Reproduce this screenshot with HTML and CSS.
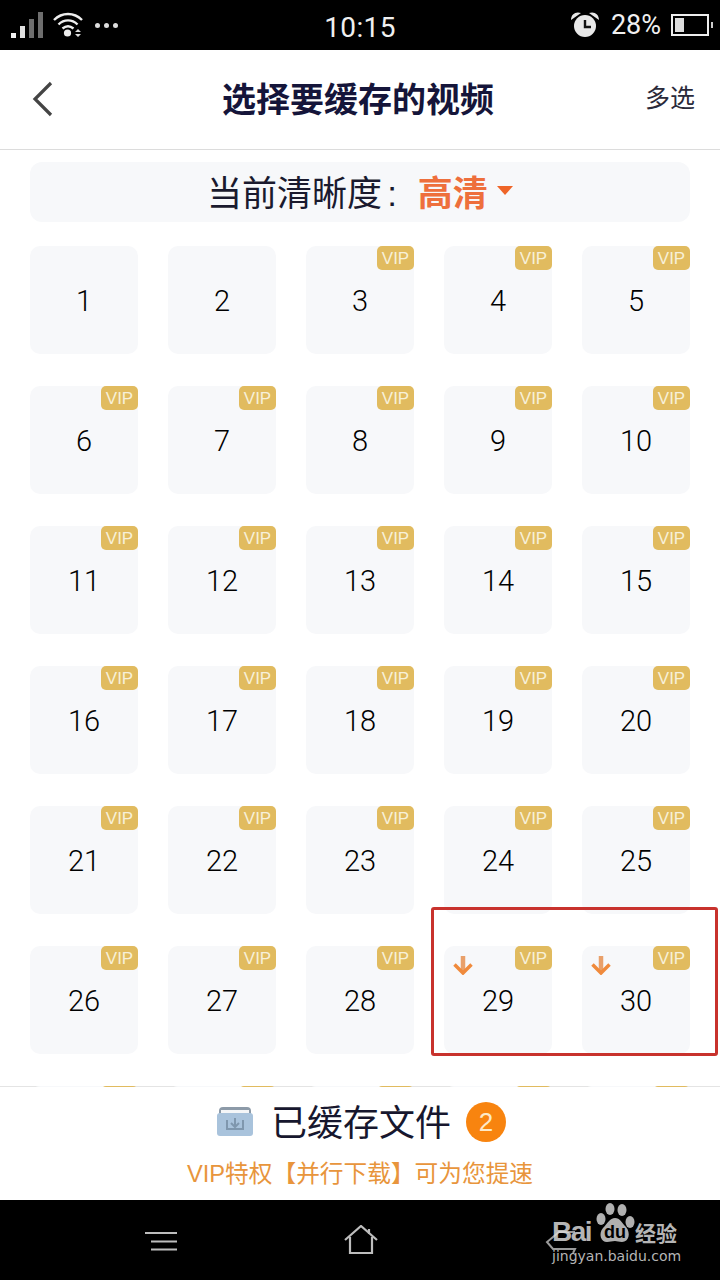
FILE: index.html
```html
<!DOCTYPE html>
<html lang="zh-CN">
<head>
<meta charset="UTF-8">
<meta name="viewport" content="width=device-width, initial-scale=1.0">
<title>选择要缓存的视频</title>
<link rel="stylesheet" href="styles.css">
</head>
<body>

<div class="screen">
    <div class="status-bar">
        <div class="status-left">
            <svg class="icon-signal" width="32" height="28" viewBox="0 0 32 28">
                <rect x="0" y="22" width="5" height="5" fill="#f2f2f2"/>
                <rect x="9" y="15" width="5" height="12" fill="#e0e0e0"/>
                <rect x="18" y="8" width="5" height="19" fill="#6e6e6e"/>
                <rect x="27" y="1" width="5" height="26" fill="#6e6e6e"/>
            </svg>
            <svg class="icon-wifi" width="32" height="26" viewBox="0 0 32 26">
                <path d="M2 8 C10 0 22 0 30 8" fill="none" stroke="#eee" stroke-width="2.4"/>
                <path d="M6.500 12.500 C12 7 20 7 25.500 12.500" fill="none" stroke="#eee" stroke-width="2.4"/>
                <path d="M10.500 16.500 C14 13.500 18 13.500 21.500 16.500" fill="none" stroke="#eee" stroke-width="2.4"/>
                <circle cx="15.500" cy="21" r="3.600" fill="#eee"/>
                <path d="M23 20 L26 17 L29 20 Z M23 22 L29 22 L26 25 Z" fill="#ddd"/>
            </svg>
            <div class="status-dots"><span></span><span></span><span></span></div>
        </div>
        <div class="status-time">10:15</div>
        <div class="status-right">
            <svg width="28" height="26" viewBox="0 0 28 26">
                <circle cx="14" cy="14" r="11" fill="#e8e8e8"/>
                <path d="M0 8 C0 2 5 -1 10 1 Z M28 8 C28 2 23 -1 18 1 Z" fill="#e8e8e8"/>
                <path d="M14 8 V15 H20" fill="none" stroke="#111" stroke-width="2.4"/>
            </svg>
            <span class="status-pct">28%</span>
            <div class="battery"><div class="battery-level"></div></div>
        </div>
    </div>

    <div class="header">
        <svg class="back" width="22" height="36" viewBox="0 0 22 36">
            <path d="M19 2 L3 18 L19 34" fill="none" stroke="#444" stroke-width="3.2"/>
        </svg>
        <h1 class="title">选择要缓存的视频</h1>
        <span class="multi">多选</span>
    </div>

    <div class="content">
        <div class="quality">
            <span class="quality-label">当前清晰度<span class="colon">:</span></span>
            <span class="quality-value">高清</span>
            <span class="caret"></span>
        </div>
        <div class="grid">
            <div class="cell">1</div>
            <div class="cell">2</div>
            <div class="cell">3<span class="vip">VIP</span></div>
            <div class="cell">4<span class="vip">VIP</span></div>
            <div class="cell">5<span class="vip">VIP</span></div>
            <div class="cell">6<span class="vip">VIP</span></div>
            <div class="cell">7<span class="vip">VIP</span></div>
            <div class="cell">8<span class="vip">VIP</span></div>
            <div class="cell">9<span class="vip">VIP</span></div>
            <div class="cell">10<span class="vip">VIP</span></div>
            <div class="cell">11<span class="vip">VIP</span></div>
            <div class="cell">12<span class="vip">VIP</span></div>
            <div class="cell">13<span class="vip">VIP</span></div>
            <div class="cell">14<span class="vip">VIP</span></div>
            <div class="cell">15<span class="vip">VIP</span></div>
            <div class="cell">16<span class="vip">VIP</span></div>
            <div class="cell">17<span class="vip">VIP</span></div>
            <div class="cell">18<span class="vip">VIP</span></div>
            <div class="cell">19<span class="vip">VIP</span></div>
            <div class="cell">20<span class="vip">VIP</span></div>
            <div class="cell">21<span class="vip">VIP</span></div>
            <div class="cell">22<span class="vip">VIP</span></div>
            <div class="cell">23<span class="vip">VIP</span></div>
            <div class="cell">24<span class="vip">VIP</span></div>
            <div class="cell">25<span class="vip">VIP</span></div>
            <div class="cell">26<span class="vip">VIP</span></div>
            <div class="cell">27<span class="vip">VIP</span></div>
            <div class="cell">28<span class="vip">VIP</span></div>
            <div class="cell">29<span class="vip">VIP</span>
                <svg class="arrow" width="20" height="20" viewBox="0 0 20 20">
                    <path d="M10 1 V17" stroke="#e9a06a" stroke-width="4.5"/>
                    <path d="M1.500 9.500 L10 18 L18.500 9.500" fill="none" stroke="#f08a3c" stroke-width="3.5"/>
                </svg>
            </div>
            <div class="cell">30<span class="vip">VIP</span>
                <svg class="arrow" width="20" height="20" viewBox="0 0 20 20">
                    <path d="M10 1 V17" stroke="#e9a06a" stroke-width="4.5"/>
                    <path d="M1.500 9.500 L10 18 L18.500 9.500" fill="none" stroke="#f08a3c" stroke-width="3.5"/>
                </svg>
            </div>
            <!-- next row, only the top edge of its badges shows -->
            <div class="cell"><span class="vip"></span></div>
            <div class="cell"><span class="vip"></span></div>
            <div class="cell"><span class="vip"></span></div>
            <div class="cell"><span class="vip"></span></div>
            <div class="cell"><span class="vip"></span></div>
        </div>
    </div>

    <div class="footer">
        <div class="cached">
            <svg class="folder" width="38" height="32" viewBox="0 0 38 32">
                <path d="M3 6 Q3 2 7 2 H31 Q35 2 35 6 V12 H3 Z" fill="#8c9aa8"/>
                <rect x="5" y="5" width="28" height="5" fill="#f4f6f8"/>
                <rect x="1" y="8" width="36" height="23" rx="3" fill="#a9c3dc"/>
                <path d="M11 15 V24 H27 V15" fill="none" stroke="#7f97ae" stroke-width="2"/>
                <path d="M19 13 V21 M15 18 L19 22 L23 18" fill="none" stroke="#7f97ae" stroke-width="2"/>
            </svg>
            <span class="cached-text">已缓存文件</span>
            <span class="count">2</span>
        </div>
        <div class="promo">VIP特权【并行下载】可为您提速</div>
    </div>

    <div class="nav">
        <svg class="nav-menu" width="32" height="20" viewBox="0 0 32 20">
            <path d="M0 2 H32 M6 10.500 H32 M6 18.500 H32" stroke="#bdbdbd" stroke-width="2.2"/>
        </svg>
        <svg class="nav-home" width="34" height="30" viewBox="0 0 34 30">
            <path d="M1 15 L17 1 L33 15 M6 12 V28 H28 V12 M25 4 V9" fill="none" stroke="#bdbdbd" stroke-width="2.2"/>
        </svg>
    </div>

    <!-- annotation drawn on the screenshot -->
    <div class="red-box"></div>

    <div class="watermark">
        <svg class="wm-paw" width="44" height="42" viewBox="0 0 44 42">
            <ellipse cx="6" cy="16" rx="4.500" ry="6" fill="#b0b0b0"/>
            <ellipse cx="15" cy="6" rx="4.500" ry="6" fill="#b0b0b0"/>
            <ellipse cx="27" cy="7" rx="4.500" ry="6" fill="#b0b0b0"/>
            <ellipse cx="35" cy="19" rx="4.500" ry="6" fill="#b0b0b0"/>
            <path d="M20 15 C25 15 27 20 31 24 C36 30 34 39 27 39 C24 39 22 38 20 38 C17 38 15 39 12 39 C6 39 3 31 8 25 C12 21 15 15 20 15 Z" fill="#b0b0b0"/>
        </svg>
        <span class="wm-bai">Bai</span>
        <span class="wm-du">du</span>
        <span class="wm-cn">经验</span>
        <span class="wm-url">jingyan.baidu.com</span>
        <svg class="wm-arrow" width="32" height="24" viewBox="0 0 32 24">
            <path d="M30 2 H14 L2 12 L8 19 H30 L28 23" fill="none" stroke="#ddd" stroke-opacity="0.7" stroke-width="2"/>
        </svg>
    </div>
</div>

</body>
</html>
```

FILE: styles.css
```css
* {
    box-sizing: border-box;
}
body {
    margin: 0;
    background-color: #fff;
    font-family: "Liberation Sans", "Noto Sans CJK SC", sans-serif;
}
.screen {
    position: relative;
    width: 720px;
    height: 1280px;
    display: flex;
    flex-direction: column;
    overflow: hidden;
}

/* status bar */
.status-bar {
    height: 50px;
    flex: none;
    background-color: #000;
    color: #f0f0f0;
    display: grid;
    grid-template-columns: 1fr auto 1fr;
    align-items: center;
    padding: 0 9px 0 11px;
}
.status-left {
    display: flex;
    align-items: center;
    gap: 9px;
}
.status-dots {
    display: flex;
    gap: 4px;
    margin-left: 2px;
}
.status-dots span {
    width: 5px;
    height: 5px;
    border-radius: 50%;
    background-color: #ddd;
}
.status-time {
    font-family: Roboto, sans-serif;
    font-size: 28px;
    letter-spacing: 0.4px;
    padding: 4px 2px 0 0;
}
.status-right {
    display: flex;
    align-items: center;
    justify-content: flex-end;
}
.status-pct {
    font-family: Roboto, sans-serif;
    font-size: 27px;
    margin: 0 10px 0 12px;
}
.battery {
    position: relative;
    width: 38px;
    height: 22px;
    border: 2px solid #eee;
    padding: 2px;
    margin-right: 2px;
}
.battery::after {
    content: "";
    position: absolute;
    right: -6px;
    top: 6px;
    width: 2px;
    height: 6px;
    background-color: #ccc;
}
.battery-level {
    width: 28%;
    min-width: 9px;
    height: 100%;
    background-color: #ddd;
}

/* header */
.header {
    position: relative;
    height: 100px;
    flex: none;
    display: flex;
    align-items: center;
    justify-content: space-between;
    padding: 0 25px 2px 32px;
    border-bottom: 1px solid #dcdcdc;
}
.back {
    display: block;
}
.title {
    position: absolute;
    left: 0;
    right: 4px;
    margin: 0;
    text-align: center;
    font-size: 34px;
    font-weight: 700;
    color: #15153a;
    padding-bottom: 2px;
}
.multi {
    font-size: 25px;
    color: #2a2a3a;
    padding-bottom: 5px;
}

/* scrolling list */
.content {
    height: 937px;
    flex: none;
    overflow: hidden;
    padding: 12px 30px 0;
}
.quality {
    height: 60px;
    display: flex;
    align-items: center;
    justify-content: center;
    background-color: #f7f8fa;
    border-radius: 12px;
    margin-bottom: 24px;
    padding: 0 0 4px 0;
}
.quality-label {
    font-size: 35px;
    color: #1a1a2e;
    margin-right: 21px;
}
.colon {
    margin-left: 5px;
}
.quality-value {
    font-size: 35px;
    font-weight: 700;
    color: #ee6f3c;
}
.caret {
    width: 0;
    height: 0;
    margin-left: 9px;
    border-left: 8px solid transparent;
    border-right: 8px solid transparent;
    border-top: 9px solid #ef6528;
}
.grid {
    display: grid;
    grid-template-columns: repeat(5, 108px);
    grid-auto-rows: 108px;
    gap: 32px 30px;
}
.cell {
    position: relative;
    background-color: #f7f8fa;
    border-radius: 10px;
    font-family: Roboto, sans-serif;
    font-size: 29px;
    font-weight: 300;
    line-height: 110px;
    text-align: center;
    color: #000;
}
.vip {
    position: absolute;
    top: 0;
    right: 0;
    width: 37px;
    height: 24px;
    border-radius: 5px;
    background-color: #e1bb5f;
    color: #f7f0d8;
    font-family: "Liberation Sans", sans-serif;
    font-size: 17px;
    font-weight: 400;
    line-height: 26px;
}
.arrow {
    position: absolute;
    left: 9px;
    top: 9px;
}

/* bottom bar */
.footer {
    flex: 1;
    margin-top: -1px;
    background-color: #fff;
    background-clip: padding-box;
    border-top: 1px solid rgba(210, 210, 210, 0.6);
    display: flex;
    flex-direction: column;
    align-items: center;
}
.cached {
    display: flex;
    align-items: center;
    height: 69px;
    margin-bottom: 3px;
    padding-left: 2px;
}
.folder {
    margin-right: 17px;
    margin-top: -1px;
}
.cached-text {
    font-size: 36px;
    color: #17172e;
    margin-top: -3px;
}
.count {
    width: 40px;
    height: 40px;
    margin-left: 15px;
    border-radius: 50%;
    background-color: #f8840f;
    color: #fde9c8;
    font-size: 26px;
    line-height: 40px;
    text-align: center;
}
.promo {
    font-size: 23.7px;
    color: #e8953c;
    line-height: 30px;
}

/* system nav */
.nav {
    position: relative;
    height: 80px;
    flex: none;
    background-color: #000;
    display: flex;
    align-items: center;
    padding: 0 0 0 145px;
    gap: 167px;
}
.nav-menu {
    margin-top: 1px;
}
.nav-home {
    margin-top: -1px;
}

.red-box {
    position: absolute;
    left: 431px;
    top: 907px;
    width: 287px;
    height: 149px;
    border: 3px solid #c8322d;
    border-radius: 3px;
}

/* logo stamped over the nav bar */
.watermark {
    position: absolute;
    left: 545px;
    top: 1203px;
    width: 140px;
    height: 64px;
    color: #b5b5b5;
    white-space: nowrap;
}
.wm-paw {
    position: absolute;
    left: 50px;
    top: 0;
}
.wm-bai {
    position: absolute;
    left: 7px;
    top: 15px;
    font-size: 28px;
    font-weight: 700;
    line-height: 28px;
    letter-spacing: -1.5px;
}
.wm-du {
    position: absolute;
    left: 59px;
    top: 20px;
    color: #000;
    font-size: 18px;
    font-weight: 700;
    line-height: 18px;
}
.wm-cn {
    position: absolute;
    left: 90px;
    top: 20px;
    font-size: 21px;
    font-weight: 700;
    line-height: 21px;
}
.wm-url {
    position: absolute;
    left: 7px;
    top: 45px;
    font-family: "DejaVu Sans", sans-serif;
    font-size: 14px;
    line-height: 16px;
}
.wm-arrow {
    position: absolute;
    left: 0;
    top: 27px;
}
```
